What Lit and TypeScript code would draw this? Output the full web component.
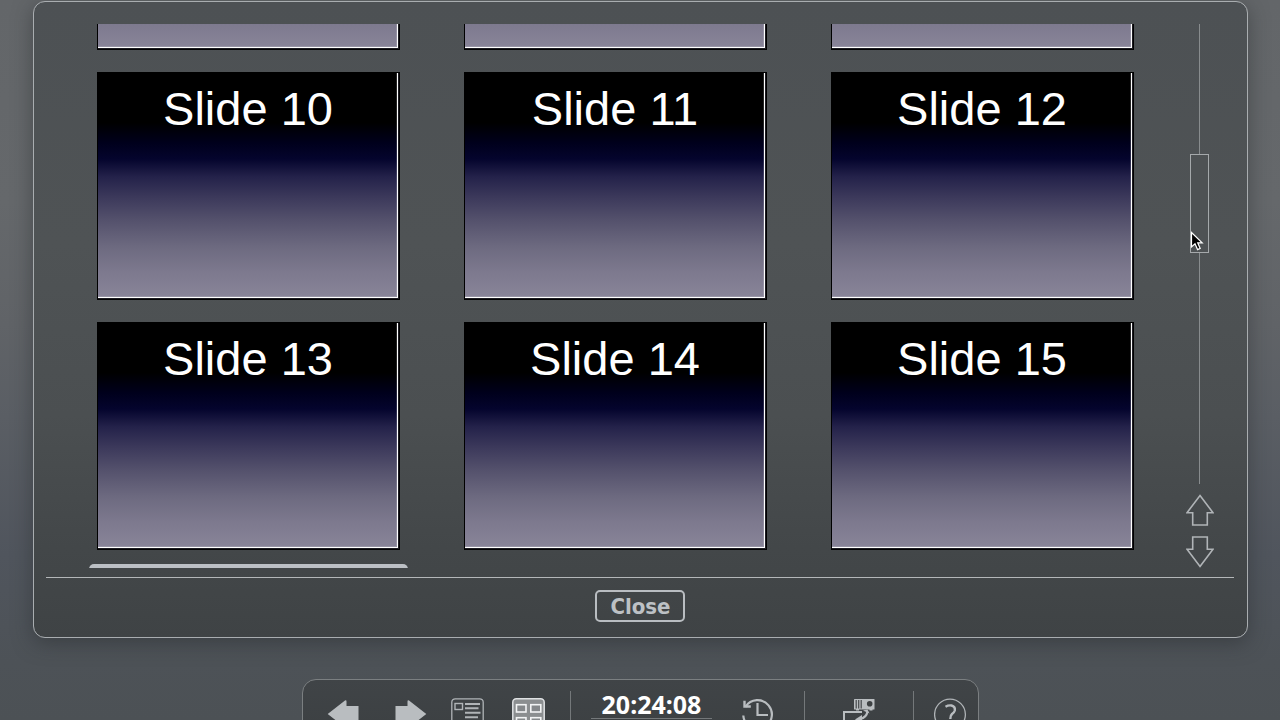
import { LitElement, html, css, svg, nothing } from "lit";
import { customElement, property, state, query } from "lit/decorators.js";
import { classMap } from "lit/directives/class-map.js";

@customElement("slide-tile")
class SlideTile extends LitElement {
  @property({ type: Number }) number = 1;
  @property({ type: Boolean }) selected = false;
  @property({ type: Boolean }) titled = false;

  static styles = css`
    :host {
      display: block;
    }
    .frame {
      display: block;
      width: 100%;
      margin: 0;
      padding: 8px;
      border: 0;
      border-radius: 5px;
      background: transparent;
      font: 47px/56px "Liberation Sans", Arial, sans-serif;
    }
    .frame.selected {
      background: #bcc0c5;
    }
    .slide {
      display: block;
      box-sizing: border-box;
      aspect-ratio: 303 / 228;
      padding: 8px 1px 0 0;
      border: 1px solid #000;
      color: #fff;
      text-align: center;
      background: linear-gradient(
        #000 0%,
        #000 22%,
        #00001c 31%,
        #04042d 38%,
        #24224a 46%,
        #3c395b 55%,
        #54516c 65%,
        #6d6a80 77%,
        #7d798e 88%,
        #898599 100%
      );
      box-shadow: inset -1px -1px #1c1b22, inset -2px -2px #fff, inset -3px -3px rgba(255, 255, 255, 0.15);
    }
  `;

  render() {
    return html`<button
      class=${classMap({ frame: true, selected: this.selected })}
      aria-label=${`Slide ${this.number}`}
    >
      <span class="slide">${this.titled ? html`Slide ${this.number}` : nothing}</span>
    </button>`;
  }
}

@customElement("slide-overview")
class SlideOverview extends LitElement {
  @state() private position = 36;
  @query(".viewport") private viewport!: HTMLElement;

  private numbers = Array.from({ length: 12 }, (_, i) => i + 7);
  private current = 16;
  private firstInView = 10;
  private lastInView = 15;

  static styles = css`
    :host {
      display: flex;
      flex-direction: column;
      position: relative;
      box-sizing: border-box;
      border: 1px solid #a9adb0;
      border-radius: 12px;
      background: linear-gradient(#4d5154, #4f5355 38%, #4b4f51 65%, #434749 86%, #3f4345);
      box-shadow: 0 5px 20px rgba(40, 43, 46, 0.5);
    }
    .body {
      flex: 1;
      min-height: 0;
      display: flex;
      gap: 44px;
      padding: 22px 33px 9px 55px;
    }
    .viewport {
      flex: 1;
      overflow: hidden;
    }
    .grid {
      display: grid;
      grid-template-columns: repeat(3, 1fr);
      column-gap: 48px;
      row-gap: 6px;
    }
    .scroll {
      position: relative;
      display: flex;
      flex-direction: column;
      gap: 10px;
      width: 28px;
    }
    .slider {
      flex: 1;
      min-height: 0;
      width: 19px;
      margin: 0 4px;
      writing-mode: vertical-lr;
      -webkit-appearance: none;
      appearance: none;
      background: linear-gradient(#888c8e, #888c8e) center / 1px 100% no-repeat;
    }
    .slider::-webkit-slider-thumb {
      -webkit-appearance: none;
      box-sizing: border-box;
      width: 19px;
      height: 99px;
      border: 1px solid #a5a9ab;
      border-radius: 0;
      background: #4e5254;
    }
    .step {
      display: block;
      width: 28px;
      height: 32px;
      padding: 0;
      border: 0;
      background: none;
    }
    .step svg {
      display: block;
      fill: none;
      stroke: #b0b4b7;
      stroke-width: 1.6;
    }
    .pointer {
      position: absolute;
      left: 4px;
      top: 207px;
      pointer-events: none;
    }
    .footer {
      display: flex;
      justify-content: center;
      margin: 0 13px 0 12px;
      padding: 12px 0 15px;
      border-top: 1px solid #b4b7b9;
    }
    .close {
      box-sizing: border-box;
      height: 32px;
      padding: 2px 12px 0 13px;
      border: 2px solid #b9bdc1;
      border-radius: 5px;
      background: transparent;
      color: #bdc1c5;
      font: bold 22px/26px "DejaVu Sans Condensed", "DejaVu Sans", sans-serif;
    }
  `;

  async firstUpdated() {
    await this.updateComplete;
    await Promise.all(
      Array.from(this.renderRoot.querySelectorAll("slide-tile")).map((t) => (t as LitElement).updateComplete)
    );
    this.viewport.scrollTop = 210;
  }

  render() {
    return html`
      <div class="body">
        <div class="viewport">
          <div class="grid">
            ${this.numbers.map(
              (n) => html`<slide-tile
                .number=${n}
                .selected=${n === this.current}
                .titled=${n >= this.firstInView && n <= this.lastInView}
              ></slide-tile>`
            )}
          </div>
        </div>
        <div class="scroll">
          <input
            class="slider"
            type="range"
            min="0"
            max="100"
            aria-label="Scroll slides"
            .value=${String(this.position)}
          />
          <button class="step" aria-label="Scroll up">
            <svg width="28" height="32"><path d="M14 1.500 L27 18.700 H21.300 V31 H6.700 V18.700 H1 Z" /></svg>
          </button>
          <button class="step" aria-label="Scroll down">
            <svg width="28" height="32"><path d="M14 30.500 L27 13.300 H21.300 V1 H6.700 V13.300 H1 Z" /></svg>
          </button>
          <svg class="pointer" width="16" height="22" viewBox="0 0 16 22">
            <path
              d="M1.500 1.500 V16 L5 12.800 L7.600 18.600 L10.200 17.400 L7.700 11.800 H12.200 Z"
              fill="#000"
              stroke="#fff"
              stroke-width="1.200"
            />
          </svg>
        </div>
      </div>
      <div class="footer"><button class="close">Close</button></div>
    `;
  }
}

const icons = {
  previous: svg`<path fill="#b9bdc0" d="M0.700 16 L18 2.500 Q19.500 1.700 19.500 3.500 V8 H31.500 V24 H19.500 V28.500 Q19.500 30.300 18 29.500 Z"/>`,
  next: svg`<path fill="#b9bdc0" d="M32.300 16 L15 2.500 Q13.500 1.700 13.500 3.500 V8 H1.500 V24 H13.500 V28.500 Q13.500 30.300 15 29.500 Z"/>`,
  notes: svg`<g fill="none" stroke="#b0b4b7"><rect x="0.800" y="0.800" width="31.400" height="31.400" rx="3.500" stroke-width="1.300"/>
    <rect x="4" y="5.500" width="7.500" height="6" stroke-width="1.400"/>
    <path stroke-width="2" d="M14 5.900H29M14 10.300H27.500M14 14.800H29.500M14 19.300H27M4 23.700H29"/></g>`,
  overview: svg`<rect x="0.800" y="0.800" width="31.400" height="31.400" rx="3.500" fill="#8b8e90" stroke="#dfe1e3" stroke-width="1.500"/>
    <g fill="#85888b" stroke="#f2f3f4" stroke-width="1.600"><rect x="4.500" y="6.700" width="9.500" height="7.300"/>
    <rect x="18.800" y="6.700" width="10" height="7.300"/><rect x="4.500" y="19.700" width="9.500" height="7.300"/>
    <rect x="18.800" y="19.700" width="10" height="7.300"/></g>`,
  history: svg`<g fill="none" stroke="#b9bdc0"><path stroke-width="2.200" d="M3.500 8.800 A14.300 14.300 0 1 1 1.300 17.500"/>
    <path stroke-width="2.200" d="M15.500 5 V17 H26"/><path stroke-width="2.400" d="M2.500 2.800 V8.500 H8.800"/></g>`,
  projector: svg`<rect x="12" y="1" width="20.500" height="10.500" rx="0.500" fill="#b9bdc0"/>
    <path fill="#b9bdc0" d="M14 11h3v1.500h-3zM27.500 11h3v1.500h-3z"/>
    <path stroke="#45494c" stroke-width="1.200" d="M14.200 2V10.500M16.700 2V10.500M19.200 2V10.500"/>
    <circle cx="27.700" cy="5.800" r="2.800" fill="#3d4143"/>
    <path fill="none" stroke="#b9bdc0" stroke-width="2" d="M20 14 H2 V27 H24 V22"/>
    <path fill="none" stroke="#b9bdc0" stroke-width="2.200" d="M25.500 13.500 Q24.500 19.500 18 21"/>
    <path fill="#b9bdc0" d="M21 12.500 L25.500 11.500 L27.500 15.500 Z"/><path fill="#b9bdc0" d="M20 17 L13 21.500 L20 25.500 Z"/>`,
  help: svg`<circle cx="16" cy="16.500" r="15.400" fill="none" stroke="#b0b4b7" stroke-width="1.300"/>
    <path fill="none" stroke="#b9bdc0" stroke-width="2.400" d="M11.500 8.700 Q14.500 7 17.500 7.500 Q21.500 8.500 20.800 12.500 Q20.300 14.300 18 16 Q16.300 17.500 16.300 21"/>
    <circle cx="16.300" cy="25" r="1.500" fill="#b9bdc0"/>`,
};

@customElement("presenter-bar")
class PresenterBar extends LitElement {
  @property() time = "20:24:08";

  static styles = css`
    :host {
      display: flex;
      align-items: center;
      box-sizing: border-box;
      padding: 11px 11px 11px 24px;
      border: 1px solid #7b7f81;
      border-radius: 14px;
      background: linear-gradient(#404447, #3b3f41);
    }
    .group {
      display: flex;
    }
    .moves {
      gap: 34px;
      margin-right: 24px;
    }
    .views {
      gap: 28px;
      margin-right: 25px;
    }
    .rule {
      align-self: stretch;
      width: 1px;
      height: 47px;
      background: #74787a;
    }
    .tool {
      display: block;
      width: 33px;
      height: 33px;
      padding: 0;
      border: 0;
      background: none;
    }
    .tool svg {
      display: block;
    }
    .clock {
      align-self: flex-start;
      box-sizing: border-box;
      width: 121px;
      margin: 0 30px 0 20px;
      border-bottom: 1px solid #74787a;
      color: #fff;
      text-align: center;
      font: bold 25px/27px "Noto Sans", "Open Sans", sans-serif;
    }
    .history {
      margin-right: 29px;
    }
    .projector {
      margin: 0 38px 0 37px;
    }
    .help {
      margin-left: 20px;
    }
  `;

  private tool(name: keyof typeof icons, label: string) {
    return html`<button class="tool ${name}" aria-label=${label}>
      <svg width="33" height="33" viewBox="0 0 33 33">${icons[name]}</svg>
    </button>`;
  }

  render() {
    return html`
      <div class="group moves">${this.tool("previous", "Previous")}${this.tool("next", "Next")}</div>
      <div class="group views">${this.tool("notes", "Notes")}${this.tool("overview", "Slides")}</div>
      <span class="rule"></span>
      <time class="clock">${this.time}</time>
      ${this.tool("history", "Restart timer")}
      <span class="rule"></span>
      ${this.tool("projector", "Exchange")}
      <span class="rule"></span>
      ${this.tool("help", "Help")}
    `;
  }
}

@customElement("app-root")
class AppRoot extends LitElement {
  static styles = css`
    :host {
      display: flex;
      flex-direction: column;
      align-items: center;
      gap: 41px;
      box-sizing: border-box;
      height: 100vh;
      padding: 1px 32px 0 33px;
      overflow: hidden;
      background: linear-gradient(#636669, #65686b 28%, #606367 45%, #5a5e64 58%, #50555d 77%, #4d5257 92%, #4c5155);
    }
    .overview {
      flex: none;
      width: 100%;
      height: calc(100vh - 83px);
    }
    .bar {
      flex: none;
    }
  `;

  render() {
    return html`
      <slide-overview class="overview"></slide-overview>
      <presenter-bar class="bar"></presenter-bar>
    `;
  }
}
